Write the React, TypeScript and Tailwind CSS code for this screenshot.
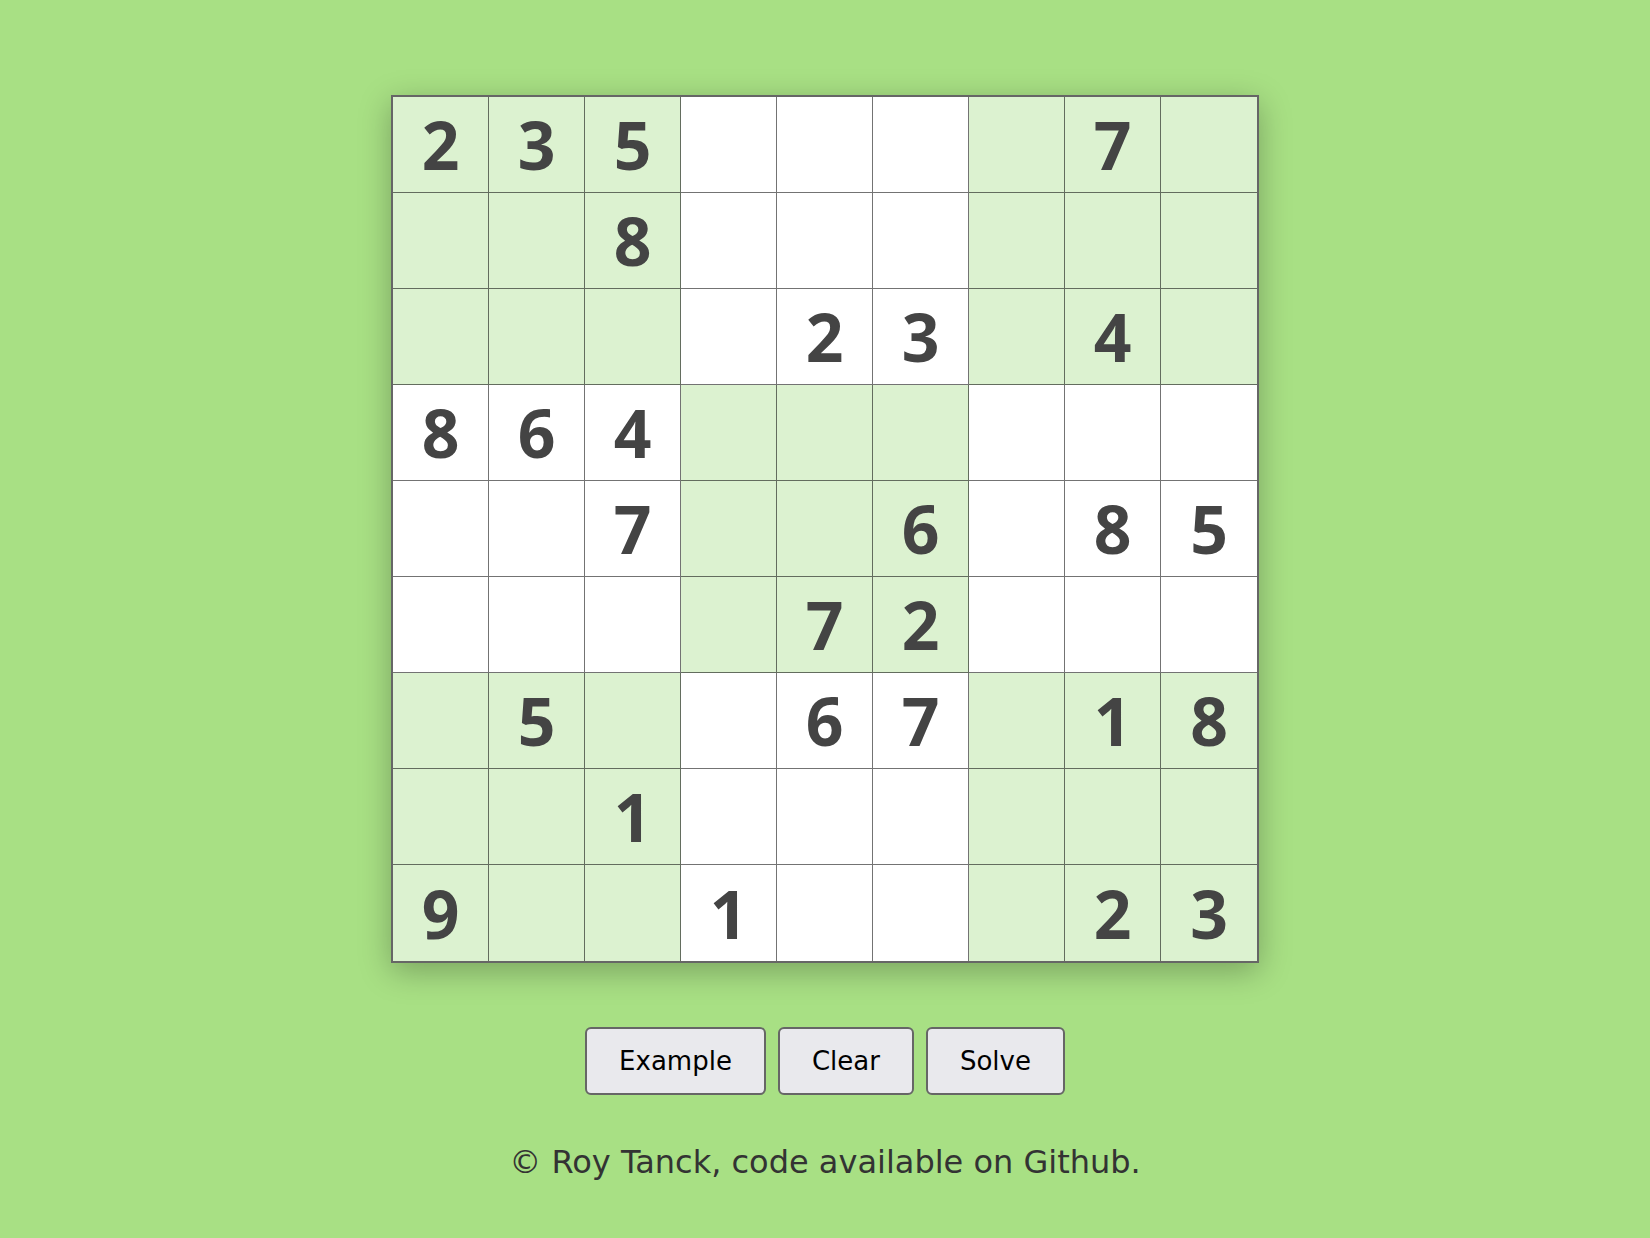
const puzzle: (number | null)[][] = [
  [2, 3, 5, null, null, null, null, 7, null],
  [null, null, 8, null, null, null, null, null, null],
  [null, null, null, null, 2, 3, null, 4, null],
  [8, 6, 4, null, null, null, null, null, null],
  [null, null, 7, null, null, 6, null, 8, 5],
  [null, null, null, null, 7, 2, null, null, null],
  [null, 5, null, null, 6, 7, null, 1, 8],
  [null, null, 1, null, null, null, null, null, null],
  [9, null, null, 1, null, null, null, 2, 3],
]

// boxes alternate shading like a checkerboard
function isShaded(row: number, col: number) {
  const box = Math.floor(row / 3) * 3 + Math.floor(col / 3)
  return box % 2 === 0
}

function Cell({ value, row, col }: { value: number | null; row: number; col: number }) {
  return (
    <div
      className={[
        'flex h-[96px] w-[96px] items-center justify-center border-black/55 text-[66px] font-bold text-[#444]',
        isShaded(row, col) ? 'bg-[#dcf2d0]' : 'bg-white',
        col < 8 ? 'border-r' : '',
        row < 8 ? 'border-b' : '',
      ].join(' ')}
      style={{ fontFamily: '"Open Sans", "Noto Sans", sans-serif' }}
    >
      {value ?? ''}
    </div>
  )
}

function Board() {
  return (
    <div className="grid grid-cols-9 border-2 border-[#666] shadow-[0_8px_30px_rgba(0,0,0,0.28)]">
      {puzzle.map((row, r) =>
        row.map((value, c) => <Cell key={`${r}-${c}`} value={value} row={r} col={c} />)
      )}
    </div>
  )
}

function ActionButton({ label }: { label: string }) {
  return (
    <button className="rounded-[6px] border-2 border-[#666] bg-[#e9e9ed] px-[32px] py-[17px] text-[26px] leading-[1.164] text-black">
      {label}
    </button>
  )
}

export default function App() {
  return (
    <div
      className="flex min-h-[1238px] flex-col items-center bg-[#a8e084] pt-[95px]"
      style={{ fontFamily: '"DejaVu Sans", sans-serif' }}
    >
      <Board />
      <div className="mt-[64px] flex gap-[12px]">
        <ActionButton label="Example" />
        <ActionButton label="Clear" />
        <ActionButton label="Solve" />
      </div>
      <p className="mt-[49px] text-[32px] leading-[1.164] text-[#333]">
        © Roy Tanck, code available on <a className="text-[#333]">Github</a>.
      </p>
    </div>
  )
}
